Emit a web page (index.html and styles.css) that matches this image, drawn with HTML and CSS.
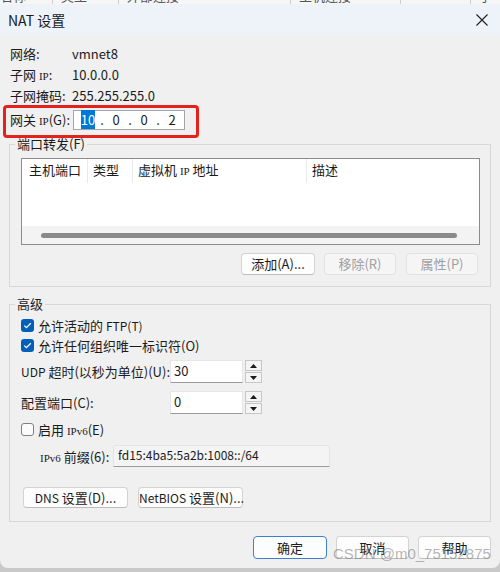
FILE: index.html
```html
<!DOCTYPE html>
<html lang="zh-CN">
<head>
<meta charset="utf-8">
<title>NAT 设置</title>
<link rel="stylesheet" href="styles.css">
</head>
<body>
<div class="behind">
  <div class="bcell">名称</div>
  <div class="bcell">类型</div>
  <div class="bcell">外部连接</div>
  <div class="bcell">主机连接</div>
  <div class="bcell"></div>
  <div class="bcell">子网</div>
</div>
<div class="dialog">
  <div class="titlebar">
    <span class="title">NAT 设置</span>
    <svg class="close" width="12" height="12" viewBox="0 0 12 12"><path d="M0.5 0.5L11.5 11.5M11.5 0.5L0.5 11.5" stroke="#1f1f1f" stroke-width="1.1" fill="none"/></svg>
  </div>
  <div class="content">
    <div class="info">
      <div class="row"><span class="lbl">网络:</span><span>vmnet8</span></div>
      <div class="row"><span class="lbl">子网 <span class="ip">IP</span>:</span><span>10.0.0.0</span></div>
      <div class="row"><span class="lbl">子网掩码:</span><span>255.255.255.0</span></div>
    </div>
    <div class="gateway">
      <span class="glbl">网关 <span class="ip">IP</span>(G):</span>
      <div class="ipbox">
        <span class="seg"><span class="sel">10</span></span><span class="dot">.</span>
        <span class="seg">0</span><span class="dot">.</span>
        <span class="seg">0</span><span class="dot">.</span>
        <span class="seg">2</span>
      </div>
    </div>

    <fieldset class="group g1">
      <legend>端口转发(F)</legend>
      <div class="list">
        <div class="lhead">
          <div class="col c1">主机端口</div>
          <div class="col">类型</div>
          <div class="col">虚拟机 <span class="ip">IP</span> 地址</div>
          <div class="col last">描述</div>
        </div>
        <div class="lbody"></div>
        <div class="hscroll"><div class="thumb"></div></div>
      </div>
      <div class="btnrow">
        <div class="btn w74">添加(A)...</div>
        <div class="btn dis w72">移除(R)</div>
        <div class="btn dis w72">属性(P)</div>
      </div>
    </fieldset>

    <fieldset class="group g2">
      <legend>高级</legend>
      <div class="chk first">
        <span class="box on"><svg width="11" height="11" viewBox="0 0 11 11"><path d="M2.3 5.6L4.4 7.7L8.8 3.2" stroke="#fff" stroke-width="1.3" fill="none"/></svg></span>
        <span>允许活动的 <span class="lat">FTP(T)</span></span>
      </div>
      <div class="chk">
        <span class="box on"><svg width="11" height="11" viewBox="0 0 11 11"><path d="M2.3 5.6L4.4 7.7L8.8 3.2" stroke="#fff" stroke-width="1.3" fill="none"/></svg></span>
        <span>允许任何组织唯一标识符(O)</span>
      </div>
      <div class="spinrow">
        <span class="slbl"><span class="lat">UDP</span> 超时(以秒为单位)(U):</span>
        <div class="spin">30</div>
        <div class="spinbtns">
          <div class="sb"><svg width="7" height="4" viewBox="0 0 7 4"><path d="M0 4L3.5 0L7 4Z" fill="#1a1a1a"/></svg></div>
          <div class="sb"><svg width="7" height="4" viewBox="0 0 7 4"><path d="M0 0L3.5 4L7 0Z" fill="#1a1a1a"/></svg></div>
        </div>
      </div>
      <div class="spinrow second">
        <span class="slbl">配置端口(C):</span>
        <div class="spin">0</div>
        <div class="spinbtns">
          <div class="sb"><svg width="7" height="4" viewBox="0 0 7 4"><path d="M0 4L3.5 0L7 4Z" fill="#1a1a1a"/></svg></div>
          <div class="sb"><svg width="7" height="4" viewBox="0 0 7 4"><path d="M0 0L3.5 4L7 0Z" fill="#1a1a1a"/></svg></div>
        </div>
      </div>
      <div class="chk third">
        <span class="box off"></span>
        <span>启用 <span class="ip">IPv6</span>(E)</span>
      </div>
      <div class="prefix">
        <span class="plbl"><span class="ip">IPv6</span> 前缀(6):</span>
        <div class="pfield">fd15:4ba5:5a2b:1008::/64</div>
      </div>
      <div class="dnsrow">
        <div class="btn w105"><span class="lat">DNS</span> 设置(D)...</div>
        <div class="btn w105"><span class="lat">NetBIOS</span> 设置(N)...</div>
      </div>
    </fieldset>

    <div class="footer">
      <div class="btn big primary w74">确定</div>
      <div class="btn big w73">取消</div>
      <div class="btn big w73">帮助</div>
    </div>
  </div>
</div>
<div class="watermark">CSDN @m0_75152875</div>
</body>
</html>
```

FILE: styles.css
```css
html, body {
  margin: 0;
  padding: 0;
}
body {
  width: 500px;
  height: 572px;
  overflow: hidden;
  position: relative;
  background: #c9c9c9;
  font-family: "Noto Sans CJK SC", "Noto Sans", sans-serif;
  font-size: 13px;
  color: #1b1b1b;
}

/* strip of the window behind */
.behind {
  height: 4px;
  overflow: hidden;
  background: #f6f6f6;
  display: grid;
  grid-template-columns: 52px 66px 172px 110px 70px 1fr;
}
.bcell {
  border-left: 1px solid #cfcfcf;
  padding-left: 8px;
  margin-top: -12px;
  line-height: 16px;
  color: #555;
  font-size: 13px;
}
.bcell:first-child {
  border-left: none;
  padding-left: 0;
}

.dialog {
  height: 564px;
  background: #f0f0f0;
  border-radius: 0 0 8px 8px;
  overflow: hidden;
}

.titlebar {
  height: 31px;
  background: #eef3fa;
  display: flex;
  align-items: center;
  justify-content: space-between;
  padding: 0 12px 0 8px;
}
.title {
  font-size: 14px;
  color: #1a1a1a;
}
.close {
  display: block;
}

.content {
  padding-top: 8px;
}

.ip {
  font-family: "Liberation Serif", serif;
  font-size: 11px;
}
.lat {
  font-size: 12px;
}

.info .row {
  display: flex;
  height: 21px;
  line-height: 21px;
  padding-left: 10px;
}
.info .lbl {
  width: 62px;
}

.gateway {
  box-sizing: border-box;
  margin: -1px 0 0 3px;
  width: 196px;
  height: 33px;
  border: 3px solid #e4221b;
  border-radius: 4px;
  display: flex;
  align-items: flex-start;
  padding: 2px 0 0 4px;
}
.glbl {
  width: 63px;
  line-height: 20px;
}
.ipbox {
  box-sizing: border-box;
  width: 112px;
  height: 20px;
  background: #fff;
  border: 1px solid #a5a5a5;
  display: flex;
  padding-left: 6px;
  line-height: 18px;
  font-size: 13px;
}
.seg {
  width: 16px;
  text-align: center;
}
.dot {
  width: 12px;
  text-align: center;
}
.sel {
  background: #0078d7;
  color: #fff;
}

/* group boxes */
.group {
  margin: 0 9px;
  padding: 0 10px 11px 5px;
  border: 1px solid #d7d7d7;
  min-width: 0;
}
.group legend {
  padding: 0 2px;
  line-height: 18px;
  font-size: 13px;
}
.g1 {
  margin-top: -3px;
}
.g2 {
  margin-top: 8px;
  padding-bottom: 13px;
}

.list {
  margin: 5px 0 0 6px;
  height: 87px;
  box-sizing: border-box;
  border: 1px solid #8c8c8c;
  background: #fff;
  display: flex;
  flex-direction: column;
}
.lhead {
  display: grid;
  grid-template-columns: 66px 45px 174px 1fr;
  height: 24px;
}
.col {
  padding-left: 5px;
  line-height: 22px;
  border-right: 1px solid #e9e9e9;
  white-space: nowrap;
}
.col.c1 {
  padding-left: 7px;
}
.col.last {
  border-right: none;
}
.lbody {
  flex: 1;
}
.hscroll {
  height: 18px;
  background: #f3f3f3;
  padding-left: 19px;
  display: flex;
  align-items: center;
}
.thumb {
  width: 416px;
  height: 5px;
  border-radius: 3px;
  background: #8a8a8a;
}

.btn {
  box-sizing: border-box;
  height: 22px;
  border: 1px solid #d3d3d3;
  border-bottom-color: #bdbdbd;
  border-radius: 4px;
  background: #fdfdfd;
  text-align: center;
  line-height: 20px;
  font-size: 13px;
  color: #1b1b1b;
  white-space: nowrap;
}
.btn.dis {
  background: #f5f5f5;
  border-color: #e3e3e3;
  color: #a0a0a0;
}
.w72 { width: 72px; }
.w73 { width: 73px; }
.w74 { width: 74px; }
.w105 { width: 105px; height: 21px; line-height: 19px; }

.btnrow {
  display: flex;
  justify-content: flex-end;
  gap: 9px;
  margin: 8px 2px 0 0;
}
.btnrow .dis:last-child {
  margin-left: 1px;
}

/* advanced */
.chk {
  display: flex;
  align-items: center;
  gap: 4px;
  height: 20px;
  margin-left: 6px;
}
.chk.first {
  margin-top: 2px;
}
.chk.third {
  margin-top: 5px;
}
.box {
  box-sizing: border-box;
  width: 13px;
  height: 13px;
  border-radius: 3px;
  display: flex;
  align-items: center;
  justify-content: center;
}
.box.on {
  background: #005fb8;
}
.box.off {
  border: 1px solid #808080;
  background: #fbfbfb;
}

.spinrow {
  display: flex;
  align-items: center;
  height: 23px;
  margin: 5px 0 0 6px;
}
.spinrow.second {
  margin-top: 8px;
}
.slbl {
  width: 149px;
  white-space: nowrap;
}
.spin {
  box-sizing: border-box;
  width: 73px;
  height: 23px;
  background: #fff;
  border: 1px solid #e6e6e6;
  border-bottom-color: #9a9a9a;
  padding: 1px 0 0 3px;
  line-height: 17px;
  align-self: flex-start;
}
.spinbtns {
  margin-left: 2px;
  width: 17px;
  height: 23px;
  display: flex;
  flex-direction: column;
  gap: 1px;
}
.sb {
  flex: 1;
  box-sizing: border-box;
  background: #f4f4f4;
  border: 1px solid #c6c6c6;
  display: flex;
  align-items: center;
  justify-content: center;
}

.prefix {
  display: flex;
  align-items: center;
  height: 22px;
  margin: 6px 0 0 25px;
}
.plbl {
  width: 73px;
  white-space: nowrap;
}
.pfield {
  box-sizing: border-box;
  width: 217px;
  height: 22px;
  background: #f4f4f4;
  border: 1px solid #e4e4e4;
  border-bottom-color: #9c9c9c;
  border-radius: 3px 3px 0 0;
  padding-left: 4px;
  line-height: 18px;
  font-size: 12px;
}

.dnsrow {
  display: flex;
  gap: 10px;
  margin: 20px 0 0 8px;
}

.footer {
  display: flex;
  justify-content: flex-end;
  gap: 9px;
  margin: 14px 9px 0 0;
}
.btn.big {
  height: 23px;
  line-height: 21px;
}
.btn.primary {
  border-color: #3f7fd0;
  background: #fbfdff;
}

.watermark {
  position: absolute;
  left: 333px;
  top: 545px;
  font-family: "Liberation Sans", Arial, sans-serif;
  font-size: 15px;
  line-height: 18px;
  color: rgba(120, 120, 120, 0.55);
  white-space: nowrap;
}
```
